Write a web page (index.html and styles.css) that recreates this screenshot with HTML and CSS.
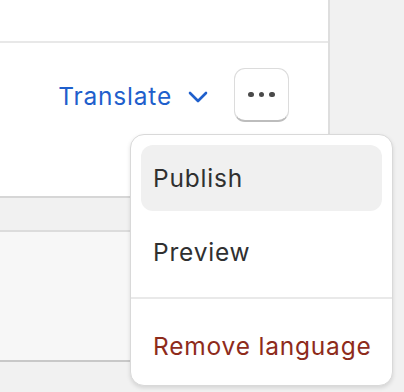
FILE: index.html
```html
<!DOCTYPE html>
<html>
<head>
<meta charset="utf-8">
<link rel="stylesheet" href="styles.css">
</head>
<body>
<div class="page">
  <div class="card">
    <div class="card-top"></div>
    <div class="card-actions">
      <button class="translate">Translate
        <svg class="chev" width="20" height="12" viewBox="0 0 20 12"><path d="M2 2 L10 10 L18 2" fill="none" stroke="#1f5fcc" stroke-width="2.6" stroke-linecap="round" stroke-linejoin="round"/></svg>
      </button>
      <button class="more" aria-label="More actions">
        <span class="dot"></span><span class="dot"></span><span class="dot"></span>
      </button>
    </div>
  </div>
  <div class="panel"></div>

  <div class="menu">
    <div class="menu-section first">
      <div class="item active">Publish</div>
      <div class="item">Preview</div>
    </div>
    <div class="menu-section last">
      <div class="item danger">Remove language</div>
    </div>
  </div>
</div>
</body>
</html>
```

FILE: styles.css
```css
html, body {
  margin: 0;
  padding: 0;
}
body {
  background: #f1f1f1;
  font-family: Inter, "Noto Sans", sans-serif;
  width: 404px;
  height: 392px;
  overflow: hidden;
}
.page {
  position: relative;
  width: 404px;
  height: 392px;
}
.card {
  width: 328px;
  height: 196px;
  background: #ffffff;
  border-right: 2px solid #dedede;
  border-bottom: 2px solid #d6d6d6;
  display: flex;
  flex-direction: column;
}
.card-top {
  height: 41px;
  border-bottom: 2px solid #e8e8e8;
}
.card-actions {
  flex: 1;
  display: flex;
  align-items: flex-start;
  justify-content: flex-end;
  padding: 25px 39px 0 0;
  gap: 26px;
}
.translate {
  border: none;
  background: none;
  padding: 0;
  margin-top: 13px;
  font-family: inherit;
  font-size: 24.5px;
  color: #1f5fcc;
  display: flex;
  align-items: center;
  gap: 16px;
  letter-spacing: 0.8px;
}
.chev {
  margin-top: 2px;
}
.more {
  width: 55px;
  height: 54px;
  box-sizing: border-box;
  border: 1px solid #dcdcdc;
  border-bottom: 2px solid #bdbdbd;
  border-radius: 11px;
  background: #ffffff;
  display: flex;
  align-items: center;
  justify-content: center;
  gap: 5px;
  padding: 0;
}
.dot {
  width: 5.5px;
  height: 5.5px;
  border-radius: 50%;
  background: #4a4a4a;
}
.panel {
  margin-top: 32px;
  width: 328px;
  height: 128px;
  background: #f7f7f7;
  border-top: 2px solid #dcdcdc;
  border-bottom: 2px solid #c8c8c8;
}
.menu {
  position: absolute;
  left: 130px;
  top: 134px;
  width: 263px;
  height: 252px;
  box-sizing: border-box;
  background: #ffffff;
  border: 1px solid #d9d9d9;
  border-radius: 14px;
  box-shadow: 0 2px 4px rgba(0,0,0,0.12);
  display: flex;
  flex-direction: column;
}
.menu-section {
  display: flex;
  flex-direction: column;
  gap: 8px;
}
.menu-section.first {
  padding: 10px 10px 12px;
  border-bottom: 2px solid #e9e9e9;
}
.menu-section.last {
  padding: 14px 10px 6px;
}
.item {
  height: 66px;
  border-radius: 12px;
  display: flex;
  align-items: center;
  padding-left: 12px;
  font-size: 24.5px;
  letter-spacing: 0.8px;
  color: #303030;
}
.item.active {
  background: #f0f0f0;
}
.item.danger {
  color: #8e2b1b;
}
```
